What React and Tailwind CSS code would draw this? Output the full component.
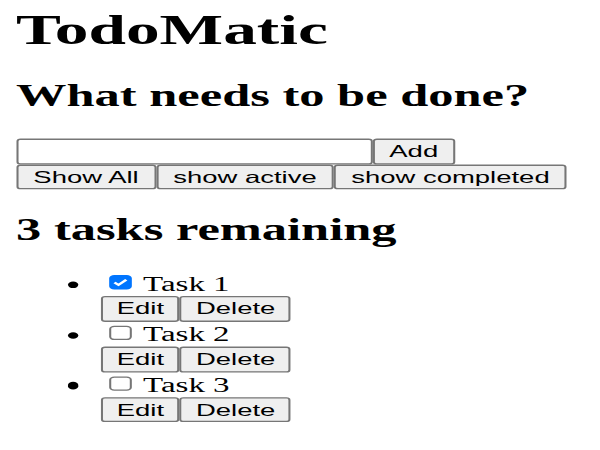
import React, { useState } from 'react'

const serif = "font-['Liberation_Serif','Times_New_Roman',serif]"
const sans = "font-['Liberation_Sans',Arial,sans-serif]"

// the reference is a default-styled page, stretched; lay out at base size and scale
function Btn({ children, className = 'px-[7.4px]' }) {
  return (
    <button
      className={`${sans} h-full text-[13.33px] leading-none text-black bg-[#efefef] border border-[#767676] rounded-[2px] ${className}`}
    >
      {children}
    </button>
  )
}

function Check({ checked }) {
  return (
    <span
      className={`ml-[4.6px] mt-[3.3px] w-[10.8px] h-[10.8px] shrink-0 rounded-[2.5px] border flex items-center justify-center ${
        checked ? 'bg-[#0075ff] border-[#0075ff]' : 'bg-white border-[#767676]'
      }`}
    >
      {checked && (
        <svg viewBox="0 0 10 10" className="w-[9px] h-[9px]">
          <path d="M1.8 5.2 L4 7.3 L8.3 2.8" fill="none" stroke="white" strokeWidth="1.7" />
        </svg>
      )}
    </span>
  )
}

export default function App() {
  const [tasks] = useState([
    { id: 1, name: 'Task 1', done: true },
    { id: 2, name: 'Task 2', done: false },
    { id: 3, name: 'Task 3', done: false },
  ])

  return (
    <div className="w-[600px] h-[450px] overflow-hidden bg-white">
      <div className="origin-top-left scale-x-[2.06] scale-y-[1.3] w-[291px] pl-[7.8px] text-black">
        <h1 className={`${serif} mt-[6px] text-[32.7px] leading-[37px] font-bold whitespace-nowrap`}>TodoMatic</h1>

        <h2 className={`${serif} mt-[18px] text-[24.5px] leading-[28px] font-bold whitespace-nowrap`}>What needs to be done?</h2>

        {/* Form */}
        <div className="mt-[18.6px] flex h-[20px]">
          <input type="text" className="w-[172.8px] h-full bg-white border border-[#767676] rounded-[2px]" />
          <Btn>Add</Btn>
        </div>
        <div className="flex h-[19.5px]">
          <Btn>Show All</Btn>
          <Btn>show active</Btn>
          <Btn>show completed</Btn>
        </div>

        <h2 className={`${serif} mt-[17.4px] text-[24.5px] leading-[28px] font-bold whitespace-nowrap`}>3 tasks remaining</h2>

        {/* Todo list */}
        <ul className="mt-[17.6px]">
          {tasks.map(task => (
            <li key={task.id} className="flex">
              <div className="w-[40.7px] shrink-0">
                <span className="block ml-[25.4px] mt-[7.8px] w-[4.4px] h-[5.1px] rounded-full bg-black" />
              </div>
              <div className="flex flex-col">
                <div className="flex h-[19px]">
                  <Check checked={task.done} />
                  <span className={`${serif} ml-[5.6px] text-[16px] leading-[19px]`}>{task.name}</span>
                </div>
                <div className="flex h-[19.8px] ml-[0.5px]">
                  <Btn className="px-[6.7px]">Edit</Btn>
                  <Btn className="px-[6.8px]">Delete</Btn>
                </div>
              </div>
            </li>
          ))}
        </ul>
      </div>
    </div>
  )
}
